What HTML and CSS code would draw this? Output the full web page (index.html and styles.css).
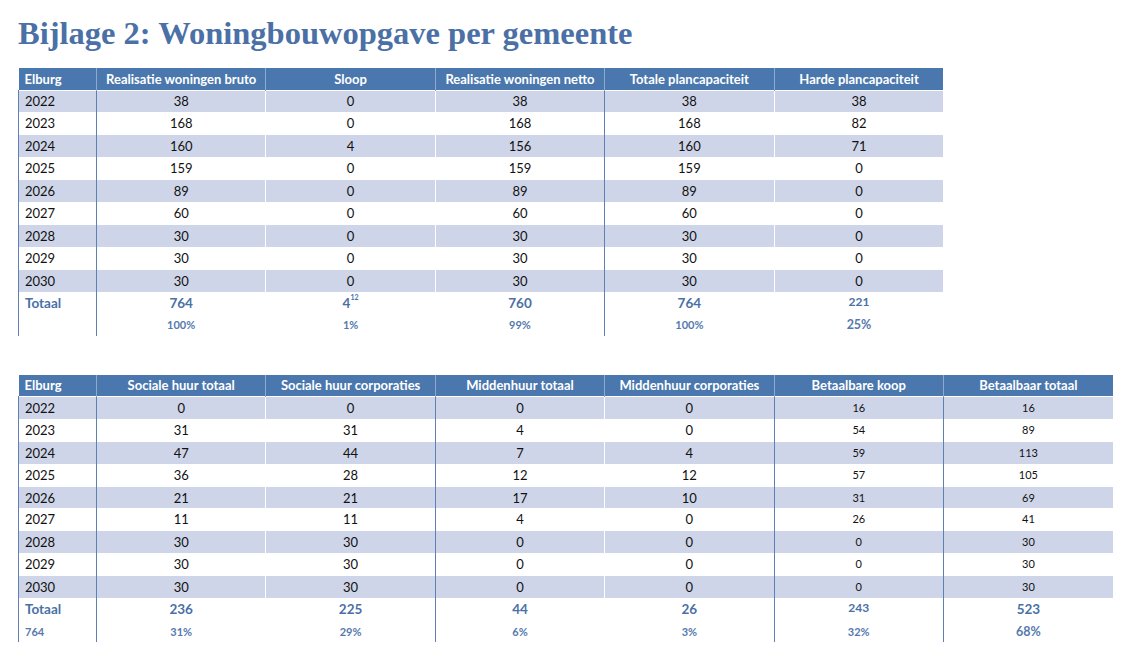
FILE: index.html
```html
<!DOCTYPE html>
<html lang="nl">
<head>
<meta charset="utf-8">
<title>Bijlage 2</title>
<link rel="stylesheet" href="styles.css">
</head>
<body>
<h1 class="title">Bijlage 2: Woningbouwopgave per gemeente</h1>

<table class="tbl tbl-1">
  <colgroup>
    <col class="c-first"><col class="c"><col class="c"><col class="c"><col class="c"><col class="c">
  </colgroup>
  <thead>
    <tr>
      <th class="first">Elburg</th>
      <th>Realisatie woningen bruto</th>
      <th>Sloop</th>
      <th>Realisatie woningen netto</th>
      <th>Totale plancapaciteit</th>
      <th>Harde plancapaciteit</th>
    </tr>
  </thead>
  <tbody>
    <tr class="alt"><td class="first dl">2022</td><td>38</td><td>0</td><td>38</td><td class="dl">38</td><td>38</td></tr>
    <tr><td class="first dl">2023</td><td>168</td><td>0</td><td>168</td><td class="dl">168</td><td>82</td></tr>
    <tr class="alt"><td class="first dl">2024</td><td>160</td><td>4</td><td>156</td><td class="dl">160</td><td>71</td></tr>
    <tr><td class="first dl">2025</td><td>159</td><td>0</td><td>159</td><td class="dl">159</td><td>0</td></tr>
    <tr class="alt"><td class="first dl">2026</td><td>89</td><td>0</td><td>89</td><td class="dl">89</td><td>0</td></tr>
    <tr><td class="first dl">2027</td><td>60</td><td>0</td><td>60</td><td class="dl">60</td><td>0</td></tr>
    <tr class="alt"><td class="first dl">2028</td><td>30</td><td>0</td><td>30</td><td class="dl">30</td><td>0</td></tr>
    <tr><td class="first dl">2029</td><td>30</td><td>0</td><td>30</td><td class="dl">30</td><td>0</td></tr>
    <tr class="alt"><td class="first dl">2030</td><td>30</td><td>0</td><td>30</td><td class="dl">30</td><td>0</td></tr>
    <tr class="total"><td class="first dl">Totaal</td><td>764</td><td>4<sup class="note">12</sup></td><td>760</td><td class="dl">764</td><td class="small">221</td></tr>
    <tr class="pct"><td class="first dl"></td><td>100%</td><td>1%</td><td>99%</td><td class="dl">100%</td><td class="big">25%</td></tr>
  </tbody>
</table>

<table class="tbl tbl-2">
  <colgroup>
    <col class="c-first"><col class="c"><col class="c"><col class="c"><col class="c"><col class="c"><col class="c">
  </colgroup>
  <thead>
    <tr>
      <th class="first">Elburg</th>
      <th>Sociale huur totaal</th>
      <th>Sociale huur corporaties</th>
      <th>Middenhuur totaal</th>
      <th>Middenhuur corporaties</th>
      <th>Betaalbare koop</th>
      <th>Betaalbaar totaal</th>
    </tr>
  </thead>
  <tbody>
    <tr class="alt"><td class="first dl">2022</td><td>0</td><td>0</td><td class="dl">0</td><td>0</td><td class="dl small">16</td><td class="dl small">16</td></tr>
    <tr><td class="first dl">2023</td><td>31</td><td>31</td><td class="dl">4</td><td>0</td><td class="dl small">54</td><td class="dl small">89</td></tr>
    <tr class="alt"><td class="first dl">2024</td><td>47</td><td>44</td><td class="dl">7</td><td>4</td><td class="dl small">59</td><td class="dl small">113</td></tr>
    <tr><td class="first dl">2025</td><td>36</td><td>28</td><td class="dl">12</td><td>12</td><td class="dl small">57</td><td class="dl small">105</td></tr>
    <tr class="alt"><td class="first dl">2026</td><td>21</td><td>21</td><td class="dl">17</td><td>10</td><td class="dl small">31</td><td class="dl small">69</td></tr>
    <tr><td class="first dl">2027</td><td>11</td><td>11</td><td class="dl">4</td><td>0</td><td class="dl small">26</td><td class="dl small">41</td></tr>
    <tr class="alt"><td class="first dl">2028</td><td>30</td><td>30</td><td class="dl">0</td><td>0</td><td class="dl small">0</td><td class="dl small">30</td></tr>
    <tr><td class="first dl">2029</td><td>30</td><td>30</td><td class="dl">0</td><td>0</td><td class="dl small">0</td><td class="dl small">30</td></tr>
    <tr class="alt"><td class="first dl">2030</td><td>30</td><td>30</td><td class="dl">0</td><td>0</td><td class="dl small">0</td><td class="dl small">30</td></tr>
    <tr class="total"><td class="first dl">Totaal</td><td>236</td><td>225</td><td class="dl">44</td><td>26</td><td class="dl small">243</td><td class="dl">523</td></tr>
    <tr class="pct"><td class="first dl">764</td><td>31%</td><td>29%</td><td class="dl">6%</td><td>3%</td><td class="dl">32%</td><td class="dl big">68%</td></tr>
  </tbody>
</table>
</body>
</html>
```
FILE: styles.css
```css
html, body {
  margin: 0;
  padding: 0;
  background: #ffffff;
}

body {
  padding: 0 0 0 18px;
  font-family: "Lato", "Liberation Sans", sans-serif;
  color: #111111;
}

.title {
  margin: 14px 0 0 0;
  font-family: "Liberation Serif", serif;
  font-weight: 700;
  font-size: 32.5px;
  line-height: 38px;
  color: #4a70a6;
  letter-spacing: 0;
}

.tbl {
  border-collapse: collapse;
  table-layout: fixed;
  margin-top: 16px;
}

.tbl-2 {
  margin-top: 39px;
}

.c-first { width: 78px; }
.c { width: 169.4px; }

.tbl-1 { width: 925px; }
.tbl-2 { width: 1093px; }

.tbl th {
  background: #4a77ad;
  color: #ffffff;
  font-weight: 700;
  font-size: 13px;
  height: 22px;
  padding: 0;
  text-align: center;
  border-left: 1px solid #8fa9cc;
  box-sizing: border-box;
}

.tbl th.first {
  text-align: left;
  padding-left: 6px;
  border-left: none;
}

.tbl td {
  height: 22.4px;
  padding: 0;
  text-align: center;
  font-size: 13px;
  border-left: 1px solid #ffffff;
  box-sizing: border-box;
  vertical-align: middle;
}

.tbl td.first {
  text-align: left;
  padding-left: 6px;
  border-left: none;
}

.tbl tr.alt td {
  background: #cfd5e8;
  border-top: 1px solid #ffffff;
}

.tbl td.first.dl {
  border-right: 1px solid #5f80b3;
}

.tbl td.dl {
  border-left: 1px solid #5f80b3;
}

.tbl td.small {
  font-size: 11px;
  vertical-align: top;
  padding-top: 4px;
}

.tbl tr.total td {
  color: #4a70a6;
  font-weight: 700;
  font-size: 13.5px;
  height: 22px;
}

.tbl tr.total td.small {
  font-size: 12px;
  padding-top: 2px;
}

.tbl tr.pct td {
  color: #5579ae;
  font-weight: 700;
  font-size: 11px;
  height: 22px;
  vertical-align: middle;
}

.tbl tr.pct td.big {
  font-size: 12.5px;
}

.note {
  font-size: 7px;
  vertical-align: top;
  line-height: 1;
  position: relative;
  top: -1px;
}
```
